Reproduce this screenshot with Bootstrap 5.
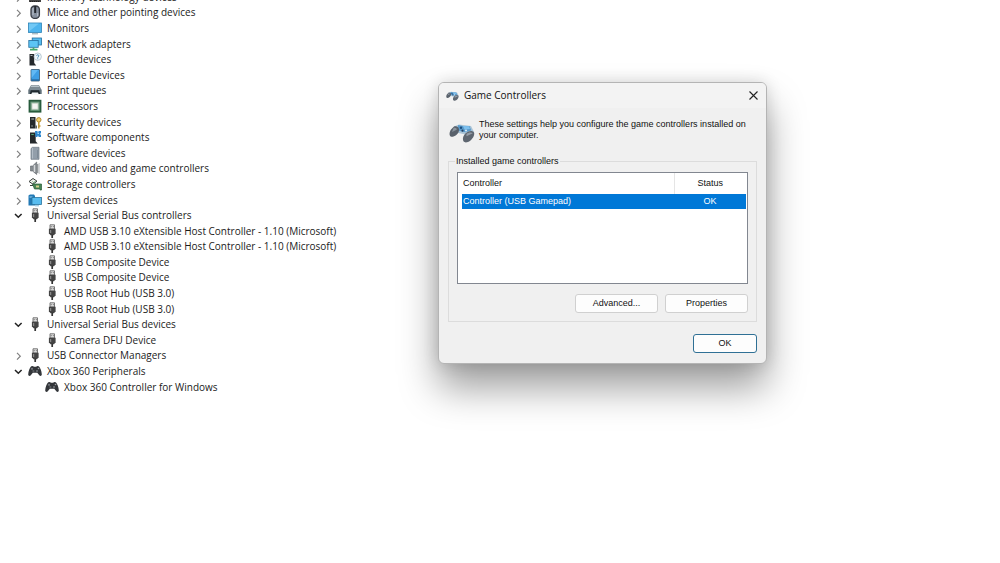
<!DOCTYPE html>
<html lang="en">
<head>
<meta charset="utf-8">
<meta name="viewport" content="width=device-width, initial-scale=1">
<title>Device Manager</title>
<link href="https://cdn.jsdelivr.net/npm/bootstrap@5.3.0/dist/css/bootstrap.min.css" rel="stylesheet">
<style>
  body { background: #fff; color: #1b1b1b; font-family: "Open Sans", "Noto Sans", sans-serif; font-size: 12px; line-height: 1.3; }
  /* the tree is scrolled so that its first row is partly out of view */
  .device-tree { margin-top: -11px; padding-left: 12px; }
  .tree-row { height: 1.3em; }
  .tree-row svg { width: 14px; height: 14px; flex: none; }
  .tree-row .tree-toggle svg { width: 12px; height: 12px; display: block; }
  .tree-label { font-size: 10px; line-height: 14px; margin-left: 5px; white-space: nowrap; }
  .tree-toggle { width: 12px; margin-right: 4px; color: #808080; }
  .tree-toggle[aria-expanded="true"] { color: #222; }
  .tree-children { padding-left: 33px; }

  .dialog-window { left: 43.8%; top: 82px; width: 329px; background: #f0f0f0; border: 1px solid #b4b4b4; border-radius: 6px;
    box-shadow: 0 24px 38px rgba(0,0,0,.38), 0 0 16px rgba(0,0,0,.14); font-family: "Liberation Sans", Arial, sans-serif; font-size: 9px; line-height: 11px; color: #111; }
  .dialog-bar { height: 25px; padding: 0 7px; gap: 5px; font-family: "Open Sans", "Noto Sans", sans-serif; font-size: 10px; background: #f3f3f3; border-radius: 5px 5px 0 0; }
  .dialog-note { margin: 11px 9px 0 10px; gap: 4px; }
  .group-frame { margin: 18px 9px 0; padding: 0 8px 8px; border: 1px solid #dcdcdc; }
  .group-frame legend { font-size: 9px; line-height: 11px; margin: -6px 0 5px -2px; padding: 0 1px; background: #f0f0f0; float: left; width: auto; }
  .list-box { clear: both; height: 112px; background: #fff; border: 1px solid #828790; padding: 0 1px 0 4px; }
  .list-grid { width: 100%; table-layout: fixed; }
  .list-grid th { font-weight: 400; height: 21px; padding: 0 1px; }
  .list-grid td { height: 15px; padding: 0 1px; background: #0078d7; color: #fff; }
  .list-grid .col-state { width: 72px; text-align: center; }
  .list-grid th.col-state { border-left: 1px solid #e5e5e5; }
  .group-actions { margin-top: 10px; gap: 7px; }
  .win-btn { --bs-btn-font-size: 9px; --bs-btn-line-height: 11px; --bs-btn-padding-y: 3px; --bs-btn-padding-x: 4px; --bs-btn-border-radius: 3px;
    --bs-btn-bg: #fdfdfd; --bs-btn-color: #111; --bs-btn-border-color: #d0d0d0; --bs-btn-hover-bg: #e0eef9; --bs-btn-hover-border-color: #0078d4;
    width: 83px; height: 19px; }
  .win-btn-default { --bs-btn-border-color: #2f7095; width: 64px; height: 19px; }
  .dialog-foot { padding: 12px 9px 10px; }
</style>
</head>
<body>

<svg class="d-none" aria-hidden="true">
  <symbol id="i-closed" viewBox="0 0 12 12"><path d="M5 3.800 8.300 7.200 5 10.600" fill="none" stroke="currentColor" stroke-width="1.200"/></symbol>
  <symbol id="i-open" viewBox="0 0 12 12"><path d="M3 5 6.300 8.300 9.600 5" fill="none" stroke="currentColor" stroke-width="1.500"/></symbol>
  <symbol id="i-memory" viewBox="0 0 14 14"><path d="M1 2h12v10H1z" fill="#444"/><path d="M3 4h8v6H3z" fill="#ddd"/><path d="M2 11.500h10" stroke="#222" stroke-dasharray="1 1"/></symbol>
  <symbol id="i-mouse" viewBox="0 0 14 14"><rect x="3" y="1" width="8.400" height="12.400" rx="3.600" fill="#8791a0" stroke="#393e46" stroke-width="1.300"/><path d="M7.200 1v7" stroke="#22262c" stroke-width="2"/><path d="M5 3v7M9.700 8v3" stroke="#c7ced8" stroke-width=".8"/></symbol>
  <symbol id="i-monitor" viewBox="0 0 14 14"><rect x=".5" y="2" width="13" height="9.500" fill="#4db4ee" stroke="#2e83b6" stroke-width=".8"/><path d="M1 10.500 11 2.400H1z" fill="#8bd6fa" opacity=".6"/><path d="M4 12.800h6" stroke="#8ba0ac"/></symbol>
  <symbol id="i-network" viewBox="0 0 14 14"><rect x="4.200" y="1" width="9.300" height="7" fill="#57bdf0" stroke="#236e9e" stroke-width=".8"/><rect x=".8" y="3.500" width="9.400" height="6.800" fill="#5cc5f5" stroke="#236e9e" stroke-width=".8"/><path d="M5.500 10.500v2M2 12.700h7.500" stroke="#45aa6c" stroke-width="1.700"/></symbol>
  <symbol id="i-other" viewBox="0 0 14 14"><path d="M1.500 2h4.700v9l2 2.500H1.500z" fill="#25292c"/><path d="M2.500 3.500h2" stroke="#a8b0b5"/><circle cx="9.700" cy="4.700" r="3.700" fill="#edf6fb" stroke="#a7b8c3" stroke-width=".7"/><path d="M8.600 3.900c.1-1.500 2.300-1.300 2.200 0 0 .9-1.100.9-1.100 1.800M9.700 6.400v.8" fill="none" stroke="#3582ae" stroke-width=".9"/></symbol>
  <symbol id="i-portable" viewBox="0 0 14 14"><rect x="3" y="1.500" width="8.500" height="11.500" rx=".5" fill="#3e9ee5" stroke="#34566f" stroke-width=".8"/><path d="M3.500 2H10l-6.500 8z" fill="#72c4fb" opacity=".7"/><path d="M3.500 12h7.500" stroke="#205988"/></symbol>
  <symbol id="i-printer" viewBox="0 0 14 14"><path d="M3 2.500h8l1 2H2z" fill="#b8c5cb" stroke="#6f7e85" stroke-width=".6"/><path d="M1.800 4.500h10.400L13.700 7v4H.3V7z" fill="#62717a"/><path d="M2.800 7.200h8.400l1 3.800H1.800z" fill="#1f292f"/><path d="M4 9.500h6l.8 2H3.200z" fill="#eef3f5"/><path d="M1.500 6h11" stroke="#aab8bf" stroke-width=".8"/></symbol>
  <symbol id="i-cpu" viewBox="0 0 14 14"><rect x="1.500" y="1.700" width="11" height="11" fill="#6f9e80" stroke="#275b3c" stroke-width="1.800"/><rect x="4" y="4.200" width="6" height="6" fill="#f4f6f2" stroke="#c2d0c1" stroke-width=".8"/></symbol>
  <symbol id="i-security" viewBox="0 0 14 14"><path d="M2 2h5.500v11.500H2z" fill="#25292c"/><path d="M3.300 4h2.800M3.300 11h1.500" stroke="#adb7b1"/><path d="M7.500 10.500v3H9v-3z" fill="#5b6264"/><circle cx="10.800" cy="4.800" r="2.200" fill="#f3d170" stroke="#b48a2d"/><path d="M10.800 7v6.500M10.800 11h1.700" stroke="#c39a38" stroke-width="1.500"/></symbol>
  <symbol id="i-component" viewBox="0 0 14 14"><path d="M2 2.500h5.700v8.700l2 2.300H2z" fill="#25292c"/><path d="M3.300 4.500h2.500" stroke="#55a675"/><path d="M7 1h2.500v1.500h1V1H13v2.500h-1v1h1V7h-2.500V5.700h-1V7H7.500z" fill="#2b86ce"/><path d="M9.500 3.500h1.500" stroke="#a8dcfa" fill="none"/></symbol>
  <symbol id="i-software" viewBox="0 0 14 14"><path d="M3 2.500 4.500 1.300H11v12H3z" fill="#929eaa" stroke="#6f7984" stroke-width=".7"/><path d="M4.500 2v10.500" stroke="#b3bdc7"/><path d="M9.500 4v8" stroke="#7e8a97"/></symbol>
  <symbol id="i-sound" viewBox="0 0 14 14"><path d="M2.500 5h2L8.700 1v12.500L4.500 10h-2z" fill="#858b90" stroke="#5d6266" stroke-width=".6"/><path d="M6.500 4v7" stroke="#d5d8da" stroke-width="1.500"/><path d="M9.800 3v9" stroke="#6d7276"/><path d="M11.200 2v11" stroke="#a5a9ad" stroke-width=".7"/></symbol>
  <symbol id="i-storage" viewBox="0 0 14 14"><path d="m1 4.500 4-3 4 2.700-4 3z" fill="#f0f2ed" stroke="#393f3b"/><path d="M2 8.500h3" stroke="#393f3b"/><path d="M4.500 7h9v6H12v-1H6.500z" fill="#478554" stroke="#295c36" stroke-width=".7"/><path d="M8 8.500h3v2H8z" fill="#d5cf88"/><path d="m4.500 4.500 1 1 2-1" stroke="#60a36d" fill="none"/></symbol>
  <symbol id="i-system" viewBox="0 0 14 14"><path d="M.5 2.500 2 1.500h4l1 1.500v9.500H.5z" fill="#2279b5"/><path d="M1.500 4h3" stroke="#9fd3f3"/><rect x="4" y="4.500" width="9.500" height="7" fill="#59bdf0" stroke="#28749f" stroke-width=".8"/><path d="M7 12.800h4" stroke="#7eb9dc"/></symbol>
  <symbol id="i-usb" viewBox="0 0 14 14"><path d="M5 .8h4.500V5H5z" fill="#e0e0e0" stroke="#696969" stroke-width=".9"/><path d="M6.200 2.200v1M8.300 2.200v1" stroke="#444" stroke-width=".8"/><path d="M3.900 4.700h6.700v4.500L9 11.300H5.500L3.900 9.200z" fill="#444"/><path d="M5.700 6v3" stroke="#999"/><path d="M7.200 10.500V14" stroke="#333" stroke-width="1.700"/></symbol>
  <symbol id="i-pad" viewBox="0 0 14 14"><path d="M3.200 2.300 5 2l.8.700h2.500L9 2l1.800.3c1.600 1.500 2.900 5 3 8.200-.3 1.900-1.800 1.800-2.700.4L9.300 8.800H4.800L3 10.900c-.9 1.400-2.500 1.500-2.800-.4.200-3.200 1.400-6.700 3-8.200z" fill="#33363a"/><circle cx="4" cy="4.800" r="1.100" fill="#74787e"/><circle cx="9" cy="7" r="1" fill="#74787e"/><circle cx="10.500" cy="4.500" r=".8" fill="#a2a4a7"/><path d="M4.500 7h1.800" stroke="#82868b"/></symbol>
  <symbol id="i-joypad" viewBox="0 0 26 20">
    <path d="M5 3.500 10 1.500 22 3l3 6-6 3-12-2.500z" fill="#a9c3d6"/>
    <path d="m9 2 6 1.200 5.500-.2 1.800 4.500-6 1.800L9 7.500z" fill="#5a9bcb"/><path d="m14 3 6 .3 1 2.700-5.500.5z" fill="#7dc0ee"/>
    <path d="M5 3.500c3-1 5.500 1 5 4-.5 3.500-4.500 6.500-7.500 6.300C-.3 13.500.3 9 2 6.500z" fill="#59616b"/>
    <path d="M4.500 5c1.800-.7 3.500.2 3.200 1.700L3 9z" fill="#8b949e"/>
    <path d="M17 10c2.800-2.500 6.800-2.800 8-.5 1.200 3-2.500 8.200-6 9.500-4 1.500-5.500-1-5-4 .3-2 1.500-3.700 3-5z" fill="#5e6670"/>
    <path d="M17.500 11c2-1.700 5-2 6.300-.7l-6.300 3z" fill="#959da6"/>
    <circle cx="12" cy="4.800" r="1.200" fill="#1b4f83"/><circle cx="13.500" cy="7.700" r="1.100" fill="#253f62"/><circle cx="17" cy="7.500" r="1" fill="#e2eef8"/>
  </symbol>
</svg>

<main class="position-relative vh-100 overflow-hidden">
  <ul class="device-tree list-unstyled mb-0" aria-label="Devices">
    <li class="tree-row d-flex align-items-center"><button class="tree-toggle btn p-0 border-0" aria-label="Expand"><svg><use href="#i-closed"/></svg></button><svg><use href="#i-memory"/></svg><span class="tree-label">Memory technology devices</span></li>
    <li class="tree-row d-flex align-items-center"><button class="tree-toggle btn p-0 border-0" aria-label="Expand"><svg><use href="#i-closed"/></svg></button><svg><use href="#i-mouse"/></svg><span class="tree-label">Mice and other pointing devices</span></li>
    <li class="tree-row d-flex align-items-center"><button class="tree-toggle btn p-0 border-0" aria-label="Expand"><svg><use href="#i-closed"/></svg></button><svg><use href="#i-monitor"/></svg><span class="tree-label">Monitors</span></li>
    <li class="tree-row d-flex align-items-center"><button class="tree-toggle btn p-0 border-0" aria-label="Expand"><svg><use href="#i-closed"/></svg></button><svg><use href="#i-network"/></svg><span class="tree-label">Network adapters</span></li>
    <li class="tree-row d-flex align-items-center"><button class="tree-toggle btn p-0 border-0" aria-label="Expand"><svg><use href="#i-closed"/></svg></button><svg><use href="#i-other"/></svg><span class="tree-label">Other devices</span></li>
    <li class="tree-row d-flex align-items-center"><button class="tree-toggle btn p-0 border-0" aria-label="Expand"><svg><use href="#i-closed"/></svg></button><svg><use href="#i-portable"/></svg><span class="tree-label">Portable Devices</span></li>
    <li class="tree-row d-flex align-items-center"><button class="tree-toggle btn p-0 border-0" aria-label="Expand"><svg><use href="#i-closed"/></svg></button><svg><use href="#i-printer"/></svg><span class="tree-label">Print queues</span></li>
    <li class="tree-row d-flex align-items-center"><button class="tree-toggle btn p-0 border-0" aria-label="Expand"><svg><use href="#i-closed"/></svg></button><svg><use href="#i-cpu"/></svg><span class="tree-label">Processors</span></li>
    <li class="tree-row d-flex align-items-center"><button class="tree-toggle btn p-0 border-0" aria-label="Expand"><svg><use href="#i-closed"/></svg></button><svg><use href="#i-security"/></svg><span class="tree-label">Security devices</span></li>
    <li class="tree-row d-flex align-items-center"><button class="tree-toggle btn p-0 border-0" aria-label="Expand"><svg><use href="#i-closed"/></svg></button><svg><use href="#i-component"/></svg><span class="tree-label">Software components</span></li>
    <li class="tree-row d-flex align-items-center"><button class="tree-toggle btn p-0 border-0" aria-label="Expand"><svg><use href="#i-closed"/></svg></button><svg><use href="#i-software"/></svg><span class="tree-label">Software devices</span></li>
    <li class="tree-row d-flex align-items-center"><button class="tree-toggle btn p-0 border-0" aria-label="Expand"><svg><use href="#i-closed"/></svg></button><svg><use href="#i-sound"/></svg><span class="tree-label">Sound, video and game controllers</span></li>
    <li class="tree-row d-flex align-items-center"><button class="tree-toggle btn p-0 border-0" aria-label="Expand"><svg><use href="#i-closed"/></svg></button><svg><use href="#i-storage"/></svg><span class="tree-label">Storage controllers</span></li>
    <li class="tree-row d-flex align-items-center"><button class="tree-toggle btn p-0 border-0" aria-label="Expand"><svg><use href="#i-closed"/></svg></button><svg><use href="#i-system"/></svg><span class="tree-label">System devices</span></li>
    <li>
      <div class="tree-row d-flex align-items-center"><button class="tree-toggle btn p-0 border-0" aria-label="Collapse" aria-expanded="true"><svg><use href="#i-open"/></svg></button><svg><use href="#i-usb"/></svg><span class="tree-label">Universal Serial Bus controllers</span></div>
      <ul class="tree-children list-unstyled">
        <li class="tree-row d-flex align-items-center"><svg><use href="#i-usb"/></svg><span class="tree-label">AMD USB 3.10 eXtensible Host Controller - 1.10 (Microsoft)</span></li>
        <li class="tree-row d-flex align-items-center"><svg><use href="#i-usb"/></svg><span class="tree-label">AMD USB 3.10 eXtensible Host Controller - 1.10 (Microsoft)</span></li>
        <li class="tree-row d-flex align-items-center"><svg><use href="#i-usb"/></svg><span class="tree-label">USB Composite Device</span></li>
        <li class="tree-row d-flex align-items-center"><svg><use href="#i-usb"/></svg><span class="tree-label">USB Composite Device</span></li>
        <li class="tree-row d-flex align-items-center"><svg><use href="#i-usb"/></svg><span class="tree-label">USB Root Hub (USB 3.0)</span></li>
        <li class="tree-row d-flex align-items-center"><svg><use href="#i-usb"/></svg><span class="tree-label">USB Root Hub (USB 3.0)</span></li>
      </ul>
    </li>
    <li>
      <div class="tree-row d-flex align-items-center"><button class="tree-toggle btn p-0 border-0" aria-label="Collapse" aria-expanded="true"><svg><use href="#i-open"/></svg></button><svg><use href="#i-usb"/></svg><span class="tree-label">Universal Serial Bus devices</span></div>
      <ul class="tree-children list-unstyled">
        <li class="tree-row d-flex align-items-center"><svg><use href="#i-usb"/></svg><span class="tree-label">Camera DFU Device</span></li>
      </ul>
    </li>
    <li class="tree-row d-flex align-items-center"><button class="tree-toggle btn p-0 border-0" aria-label="Expand"><svg><use href="#i-closed"/></svg></button><svg><use href="#i-usb"/></svg><span class="tree-label">USB Connector Managers</span></li>
    <li>
      <div class="tree-row d-flex align-items-center"><button class="tree-toggle btn p-0 border-0" aria-label="Collapse" aria-expanded="true"><svg><use href="#i-open"/></svg></button><svg><use href="#i-pad"/></svg><span class="tree-label">Xbox 360 Peripherals</span></div>
      <ul class="tree-children list-unstyled">
        <li class="tree-row d-flex align-items-center"><svg><use href="#i-pad"/></svg><span class="tree-label">Xbox 360 Controller for Windows</span></li>
      </ul>
    </li>
  </ul>

  <section class="dialog-window position-absolute" role="dialog" aria-labelledby="dialog-title">
    <header class="dialog-bar d-flex align-items-center">
      <svg width="13" height="10" aria-hidden="true"><use href="#i-joypad"/></svg>
      <span id="dialog-title">Game Controllers</span>
      <button class="btn p-0 border-0 ms-auto d-flex" aria-label="Close"><svg width="11" height="11" viewBox="0 0 11 11"><path d="m1.500 1.500 8 8m0-8-8 8" stroke="#222" stroke-width="1.100"/></svg></button>
    </header>
    <div class="dialog-note d-flex">
      <svg class="flex-shrink-0 mt-1" width="26" height="20" aria-hidden="true"><use href="#i-joypad"/></svg>
      <p class="mb-0">These settings help you configure the game controllers installed on your computer.</p>
    </div>
    <fieldset class="group-frame">
      <legend>Installed game controllers</legend>
      <div class="list-box">
        <table class="list-grid">
          <thead><tr><th scope="col">Controller</th><th scope="col" class="col-state">Status</th></tr></thead>
          <tbody><tr><td>Controller (USB Gamepad)</td><td class="col-state">OK</td></tr></tbody>
        </table>
      </div>
      <div class="group-actions d-flex justify-content-end">
        <button class="btn win-btn">Advanced...</button>
        <button class="btn win-btn">Properties</button>
      </div>
    </fieldset>
    <footer class="dialog-foot d-flex justify-content-end">
      <button class="btn win-btn win-btn-default">OK</button>
    </footer>
  </section>
</main>

<script src="https://cdn.jsdelivr.net/npm/bootstrap@5.3.0/dist/js/bootstrap.bundle.min.js"></script>
</body>
</html>
